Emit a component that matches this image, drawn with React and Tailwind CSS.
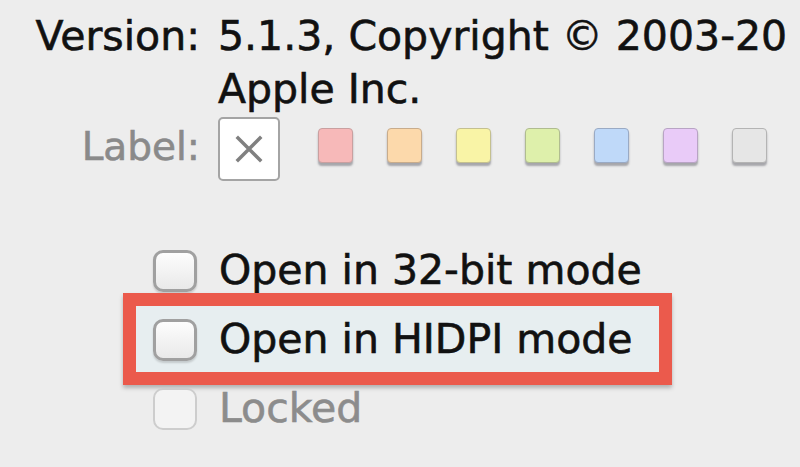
import React from 'react';

const swatches = [
  { bg: 'bg-[#f7b9b9]', border: 'border-[#c9a0a0]' },
  { bg: 'bg-[#fcd9ab]', border: 'border-[#c8ac8c]' },
  { bg: 'bg-[#f9f4a6]', border: 'border-[#c4c090]' },
  { bg: 'bg-[#def0ab]', border: 'border-[#b0bc90]' },
  { bg: 'bg-[#bfd9f9]', border: 'border-[#9aaac4]' },
  { bg: 'bg-[#e9cbf8]', border: 'border-[#b8a4c4]' },
  { bg: 'bg-[#e6e6e6]', border: 'border-[#b4b4b4]' },
];

const Checkbox = ({ disabled }) => (
  <div
    className={
      disabled
        ? 'w-[44px] h-[42px] shrink-0 rounded-[10px] border-2 border-[#cdcdcd] bg-[#f3f3f3]'
        : 'w-[44px] h-[42px] shrink-0 rounded-[10px] border-[3px] border-[#a0a0a0] bg-gradient-to-b from-[#fdfdfd] to-[#e9e9e9] shadow-[0_2px_2px_rgba(0,0,0,0.15)]'
    }
  />
);

const Option = ({ label, disabled, highlight }) => (
  <div className="relative flex items-center h-[69px] pl-[153px]">
    {highlight && (
      <div className="absolute left-[123px] top-[-12px] w-[549px] h-[92px] border-[13px] border-[#eb5a4c] bg-[#e7eef0] shadow-[0_3px_4px_rgba(0,0,0,0.25)]" />
    )}
    <div className="relative flex items-center gap-[22px]">
      <Checkbox disabled={disabled} />
      <span className={disabled ? 'text-[#8c8c8c]' : 'text-[#111]'}>{label}</span>
    </div>
  </div>
);

export default function App() {
  return (
    <div
      className="w-[800px] h-[467px] overflow-hidden bg-[#ededed] text-[41px] whitespace-nowrap [-webkit-text-stroke:0.6px_currentColor]"
      style={{ fontFamily: '"DejaVu Sans", "Noto Sans", sans-serif' }}
    >
      <div className="pt-[10px] grid grid-cols-[200px_1fr] gap-x-[18px] leading-[53px]">
        <div className="text-right text-[#111]">Version:</div>
        <div className="text-[#111]">
          <div>5.1.3, Copyright © 2003-20</div>
          <div>Apple Inc.</div>
        </div>
        <div className="text-right text-[#8a8a8a] text-[39px] leading-[60px] mt-px">Label:</div>
        <div className="flex items-start mt-px">
          <div className="w-[62px] h-[64px] shrink-0 rounded-[5px] border-2 border-[#a4a4a4] bg-white flex items-center justify-center">
            <svg width="28" height="28" viewBox="0 0 28 28">
              <path d="M3 3 L25 25 M25 3 L3 25" stroke="#808080" strokeWidth="3.5" strokeLinecap="square" />
            </svg>
          </div>
          <div className="flex gap-[34px] ml-[38px] mt-[11px]">
            {swatches.map((s, i) => (
              <div
                key={i}
                className={`w-[35px] h-[35px] rounded-[4px] border ${s.border} ${s.bg} shadow-[0_3px_2px_rgba(80,80,90,0.45)]`}
              />
            ))}
          </div>
        </div>
      </div>
      <div className="mt-[55px]">
        <Option label="Open in 32-bit mode" />
        <Option label="Open in HIDPI mode" highlight />
        <Option label="Locked" disabled />
      </div>
    </div>
  );
}
